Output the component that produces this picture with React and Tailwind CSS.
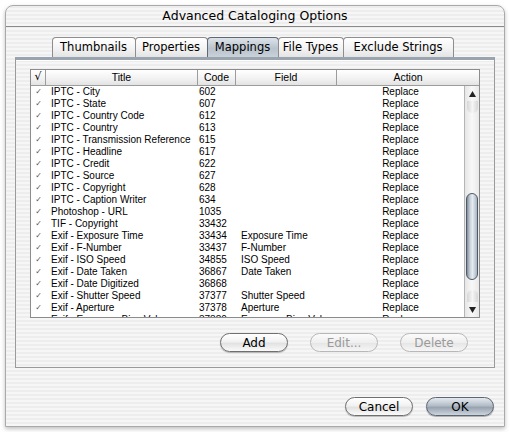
const rows = [
  ['IPTC - City', '602', ''],
  ['IPTC - State', '607', ''],
  ['IPTC - Country Code', '612', ''],
  ['IPTC - Country', '613', ''],
  ['IPTC - Transmission Reference', '615', ''],
  ['IPTC - Headline', '617', ''],
  ['IPTC - Credit', '622', ''],
  ['IPTC - Source', '627', ''],
  ['IPTC - Copyright', '628', ''],
  ['IPTC - Caption Writer', '634', ''],
  ['Photoshop - URL', '1035', ''],
  ['TIF - Copyright', '33432', ''],
  ['Exif - Exposure Time', '33434', 'Exposure Time'],
  ['Exif - F-Number', '33437', 'F-Number'],
  ['Exif - ISO Speed', '34855', 'ISO Speed'],
  ['Exif - Date Taken', '36867', 'Date Taken'],
  ['Exif - Date Digitized', '36868', ''],
  ['Exif - Shutter Speed', '37377', 'Shutter Speed'],
  ['Exif - Aperture', '37378', 'Aperture'],
  ['Exif - Exposure Bias Value', '37380', 'Exposure Bias Value'],
];

const stripes =
  'bg-[repeating-linear-gradient(180deg,#ededed_0px,#ededed_2px,#f6f6f6_2px,#f6f6f6_4px)]';

const tabs = [
  ['Thumbnails', 'w-[84px]'],
  ['Properties', 'w-[73px]'],
  ['Mappings', 'w-[72px]'],
  ['File Types', 'w-[66px]'],
  ['Exclude Strings', 'w-[111px]'],
];

function AquaButton({ label, variant = 'normal', w = 'w-[68px]' }) {
  const base = `${w} h-[19px] rounded-full flex items-center justify-center text-[12px] leading-none`;
  if (variant === 'default') {
    return (
      <div className={`${base} border border-[#5d6670] bg-[linear-gradient(180deg,#e4e9ee_0%,#b3bdc8_45%,#97a3b0_55%,#cdd5dd_100%)] shadow-[0_1px_1px_rgba(0,0,0,0.3)] text-black`}>
        {label}
      </div>
    );
  }
  if (variant === 'disabled') {
    return (
      <div className={`${base} border border-[#b8b8b8] bg-[linear-gradient(180deg,#fbfbfb_0%,#efefef_50%,#e6e6e6_55%,#f6f6f6_100%)] text-[#9a9a9a]`}>
        {label}
      </div>
    );
  }
  return (
    <div className={`${base} border border-[#6f6f6f] bg-[linear-gradient(180deg,#ffffff_0%,#f2f2f2_45%,#e2e2e2_55%,#fafafa_100%)] shadow-[0_1px_1px_rgba(0,0,0,0.25)] text-black`}>
      {label}
    </div>
  );
}

export default function App() {
  return (
    <div className="w-[510px] h-[432px] bg-white pt-[5px] pl-[5px] font-['DejaVu_Sans',sans-serif]">
      <div className={`w-[500px] h-[422px] rounded-t-[8px] border border-[#a9a9a9] shadow-[0_2px_4px_rgba(0,0,0,0.25)] ${stripes} flex flex-col overflow-hidden`}>
        {/* title bar */}
        <div className="h-[21px] border-b border-[#8a8a8a] flex items-center justify-center text-[12.5px] text-black">
          Advanced Cataloging Options
        </div>

        {/* tabs */}
        <div className="mt-[10px] flex justify-center pr-[5px] h-[20px] relative z-10">
          {tabs.map(([t, w]) => {
            const sel = t === 'Mappings';
            return (
              <div
                key={t}
                className={`${w} h-[20px] -ml-px first:ml-0 flex items-center justify-center text-[11.5px] rounded-t-[4px] border border-b-0 ${
                  sel
                    ? 'border-[#5f6974] bg-[linear-gradient(180deg,#dde3e9_0%,#b9c3cd_55%,#c9d1d9_100%)]'
                    : 'border-[#8d8d8d] bg-[linear-gradient(180deg,#ffffff_0%,#f3f3f3_55%,#e4e4e4_100%)]'
                }`}
              >
                {t}
              </div>
            );
          })}
        </div>

        {/* tab panel */}
        <div className={`mx-[9px] h-[311px] border border-[#9a9a9a] border-t-[3px] border-t-[#9aa4ae] ${stripes} shadow-[inset_0_1px_0_#ffffff] pt-[9px] flex flex-col`}>
          <div className="ml-[14px] w-[450px] h-[249px] border border-[#8c8c8c] bg-white flex flex-col text-[10px] font-['Liberation_Sans',sans-serif] text-black">
            {/* header */}
            <div className="h-[16px] flex border-b border-[#9c9c9c] bg-[linear-gradient(180deg,#ffffff_0%,#f1f1f1_60%,#e3e3e3_100%)] text-[10.5px]">
              <div className="w-[15px] border-r border-[#9c9c9c] flex items-center justify-center text-[11px] font-['DejaVu_Sans',sans-serif]">√</div>
              <div className="w-[152px] border-r border-[#9c9c9c] flex items-center justify-center">Title</div>
              <div className="w-[38px] border-r border-[#9c9c9c] flex items-center justify-center">Code</div>
              <div className="w-[101px] border-r border-[#9c9c9c] flex items-center justify-center">Field</div>
              <div className="flex-1 flex items-center justify-center">Action</div>
            </div>
            <div className="flex-1 flex overflow-hidden">
              <div className="flex-1 overflow-hidden">
                {rows.map(([title, code, field]) => (
                  <div key={code} className="h-[12px] flex items-center leading-none">
                    <div className="w-[15px] text-center text-[8px] text-[#555] font-['DejaVu_Sans',sans-serif]">✓</div>
                    <div className="w-[152px] pl-[5px] whitespace-nowrap">{title}</div>
                    <div className="w-[38px] pl-[1px]">{code}</div>
                    <div className="w-[101px] pl-[5px] whitespace-nowrap">{field}</div>
                    <div className="flex-1 text-center">Replace</div>
                  </div>
                ))}
              </div>
              {/* scrollbar */}
              <div className="w-[15px] border-l border-[#b5b5b5] bg-[linear-gradient(90deg,#e6e6e6_0%,#f8f8f8_50%,#e9e9e9_100%)] flex flex-col items-center">
                <div className="h-[15px] flex items-center justify-center">
                  <svg width="7" height="6" viewBox="0 0 7 6"><path d="M3.5 0L7 6H0z" fill="#222" /></svg>
                </div>
                <div className="w-[11px] h-[12px] rounded-b-full bg-[linear-gradient(90deg,#d6d6d6,#f5f5f5,#d6d6d6)]" />
                <div className="h-[80px]" />
                <div className="w-[12px] h-[87px] rounded-full border border-[#4e5966] bg-[linear-gradient(90deg,#7e8b99_0%,#c7d0d9_30%,#e6ebf0_55%,#aab5c1_100%)]" />
                <div className="flex-1" />
                <div className="w-[11px] h-[12px] rounded-t-full bg-[linear-gradient(90deg,#d6d6d6,#f5f5f5,#d6d6d6)]" />
                <div className="h-[15px] flex items-center justify-center">
                  <svg width="7" height="6" viewBox="0 0 7 6"><path d="M0 0H7L3.5 6z" fill="#222" /></svg>
                </div>
              </div>
            </div>
          </div>

          <div className="mt-[15px] ml-[204px] flex gap-[22px]">
            <AquaButton label="Add" />
            <AquaButton label="Edit..." variant="disabled" />
            <AquaButton label="Delete" variant="disabled" />
          </div>
        </div>

        <div className="mt-[29px] flex justify-end gap-[13px] pr-[10px]">
          <AquaButton label="Cancel" />
          <AquaButton label="OK" variant="default" />
        </div>
      </div>
    </div>
  );
}
